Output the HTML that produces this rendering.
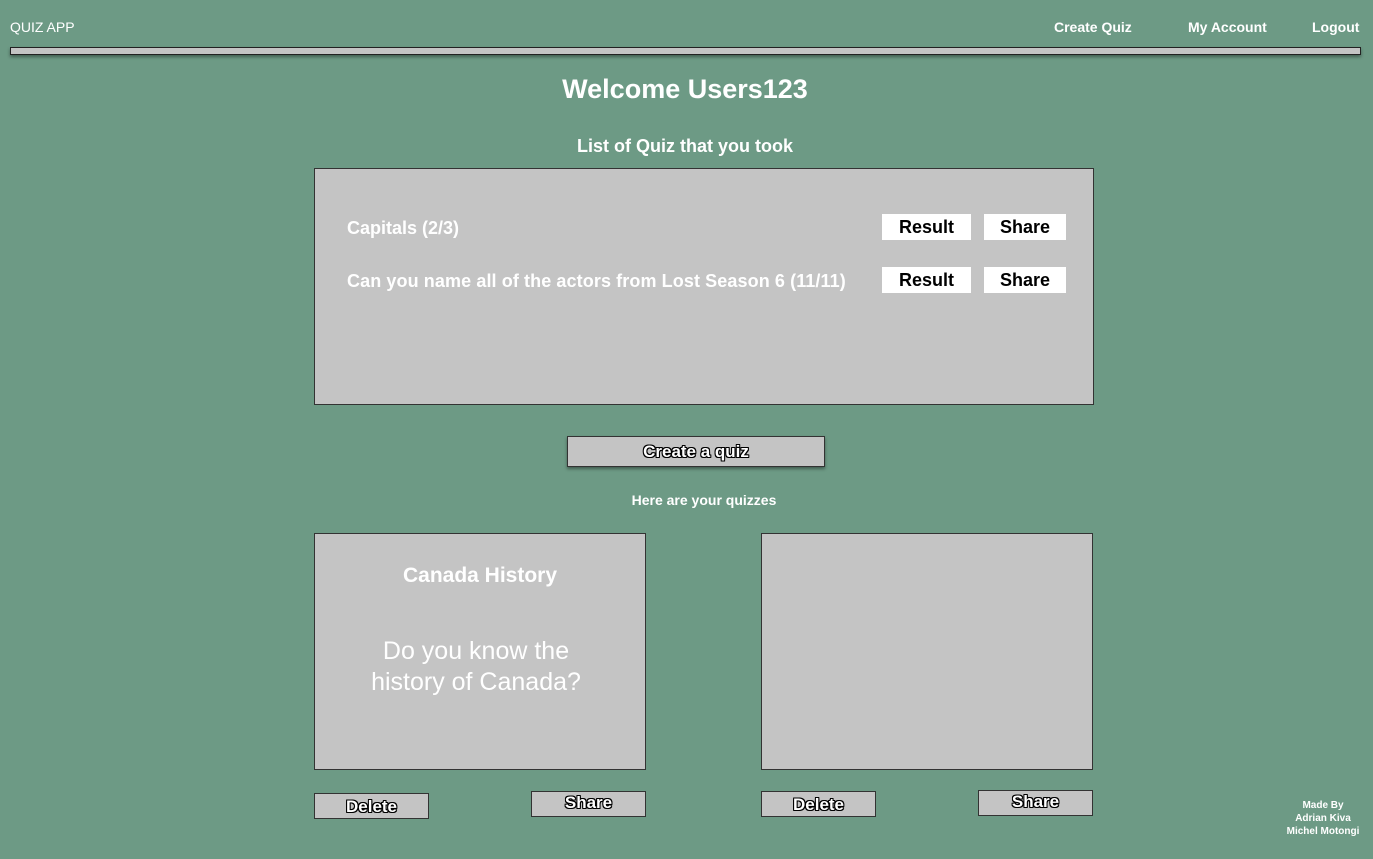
<!DOCTYPE html>
<html><head><style>
*{margin:0;padding:0;box-sizing:border-box}
body{width:1373px;height:859px;background:#6d9a85;font-family:"Liberation Sans",sans-serif;color:#fff;position:relative;overflow:hidden}
.a{position:absolute}
.box{position:absolute;background:#c4c4c4;border:1px solid #333}
.w{position:absolute;background:#fff;color:#000;font-weight:bold;font-size:18px;text-align:center;line-height:26px}
.ob{position:absolute;background:#c4c4c4;border:1px solid #333;text-align:center;font-weight:bold;color:#fff;font-size:17px;
text-shadow:-1px -1px 0 #000,1px -1px 0 #000,-1px 1px 0 #000,1px 1px 0 #000,0 1px 0 #000,0 -1px 0 #000,1px 0 0 #000,-1px 0 0 #000}
</style></head><body>
<div class="a" style="left:10px;top:19px;font-size:14px">QUIZ APP</div>
<div class="a" style="left:1054px;top:19px;font-size:14px;font-weight:bold">Create Quiz</div>
<div class="a" style="left:1188px;top:19px;font-size:14px;font-weight:bold">My Account</div>
<div class="a" style="left:1312px;top:19px;font-size:14px;font-weight:bold">Logout</div>
<div class="a" style="left:10px;top:47px;width:1351px;height:8px;background:#c4c4c4;border:1px solid #222;box-shadow:0 2px 3px rgba(0,0,0,.4)"></div>
<div class="a" style="left:0;width:1370px;top:74px;text-align:center;font-size:27px;font-weight:bold">Welcome Users123</div>
<div class="a" style="left:0;width:1370px;top:136px;text-align:center;font-size:18px;font-weight:bold">List of Quiz that you took</div>
<div class="box" style="left:314px;top:168px;width:780px;height:237px"></div>
<div class="a" style="left:347px;top:218px;font-size:18px;font-weight:bold">Capitals (2/3)</div>
<div class="a" style="left:347px;top:271px;font-size:18px;font-weight:bold;letter-spacing:0.1px">Can you name all of the actors from Lost Season 6 (11/11)</div>
<div class="w" style="left:882px;top:214px;width:89px">Result</div>
<div class="w" style="left:984px;top:214px;width:82px">Share</div>
<div class="w" style="left:882px;top:267px;width:89px">Result</div>
<div class="w" style="left:984px;top:267px;width:82px">Share</div>
<div class="ob" style="left:567px;top:436px;width:258px;height:31px;line-height:29px;box-shadow:0 2px 3px rgba(0,0,0,.4)">Create a quiz</div>
<div class="a" style="left:0;width:1408px;top:492px;text-align:center;font-size:14px;font-weight:bold">Here are your quizzes</div>
<div class="box" style="left:314px;top:533px;width:332px;height:237px"></div>
<div class="a" style="left:314px;width:332px;top:564px;text-align:center;font-size:21px;font-weight:bold">Canada History</div>
<div class="a" style="left:310px;width:332px;top:636px;text-align:center;font-size:25px;line-height:31px">Do you know the<br>history of Canada?</div>
<div class="box" style="left:761px;top:533px;width:332px;height:237px"></div>
<div class="ob" style="left:314px;top:793px;width:115px;height:26px;line-height:26px">Delete</div>
<div class="ob" style="left:531px;top:791px;width:115px;height:26px;line-height:22px">Share</div>
<div class="ob" style="left:761px;top:791px;width:115px;height:26px;line-height:26px">Delete</div>
<div class="ob" style="left:978px;top:790px;width:115px;height:26px;line-height:22px">Share</div>
<div class="a" style="left:1273px;width:100px;top:799px;text-align:center;font-size:10px;font-weight:bold;line-height:13px">Made By<br>Adrian Kiva<br>Michel Motongi</div>
</body></html>
